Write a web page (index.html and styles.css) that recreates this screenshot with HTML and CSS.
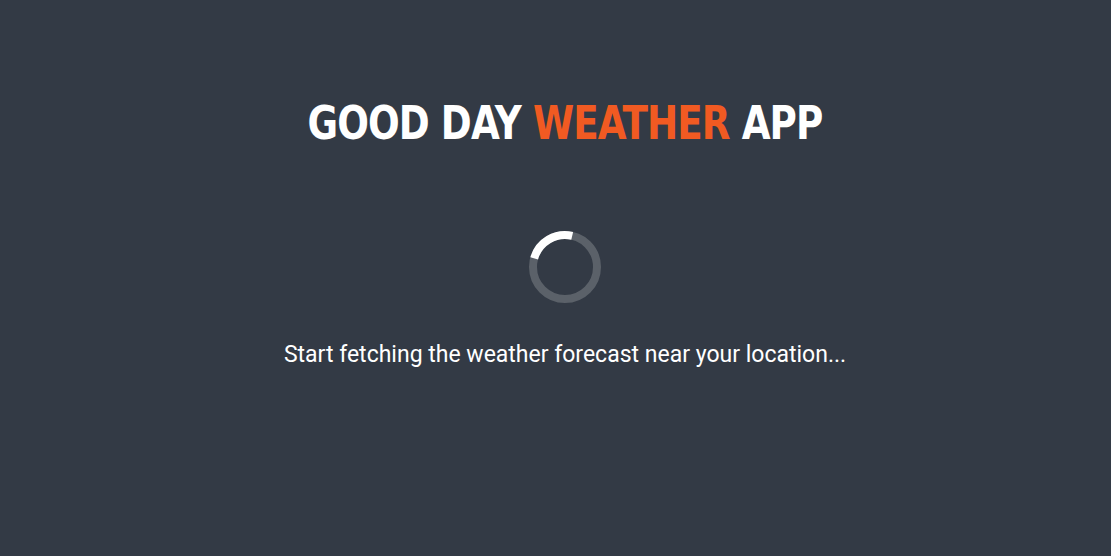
FILE: index.html
```html
<!DOCTYPE html>
<html lang="en">
<head>
<meta charset="utf-8">
<link rel="stylesheet" href="styles.css">
</head>
<body>
<main class="page">
  <h1 class="title">GOOD DAY <span class="accent">WEATHER</span> APP</h1>
  <div class="spinner">
    <svg width="74" height="74" viewBox="0 0 74 74">
      <circle cx="37" cy="37" r="32" fill="none" stroke="#5b6169" stroke-width="8"/>
      <path d="M6.2 28.3 A32 32 0 0 1 44.2 5.8" fill="none" stroke="#ffffff" stroke-width="8"/>
    </svg>
  </div>
  <p class="message">Start fetching the weather forecast near your location...</p>
</main>
</body>
</html>
```
FILE: styles.css
```css
html, body {
  margin: 0;
  padding: 0;
  background: #333a45;
  height: 100%;
}
.page {
  display: flex;
  flex-direction: column;
  align-items: center;
  padding-top: 96px;
  padding-left: 19px;
}
.title {
  margin: 0;
  font-family: "DejaVu Sans Condensed", "DejaVu Sans", sans-serif;
  font-weight: bold;
  font-size: 46px;
  line-height: 54px;
  color: #ffffff;
  letter-spacing: -1px;
  transform: scaleX(0.9);
}
.accent {
  color: #f15a22;
}
.spinner {
  margin-top: 80px;
  width: 74px;
  height: 74px;
}
.spinner svg {
  display: block;
}
.message {
  margin: 37px 0 0;
  font-family: Roboto, "Liberation Sans", sans-serif;
  font-size: 23px;
  line-height: 28px;
  color: #ffffff;
}
```
